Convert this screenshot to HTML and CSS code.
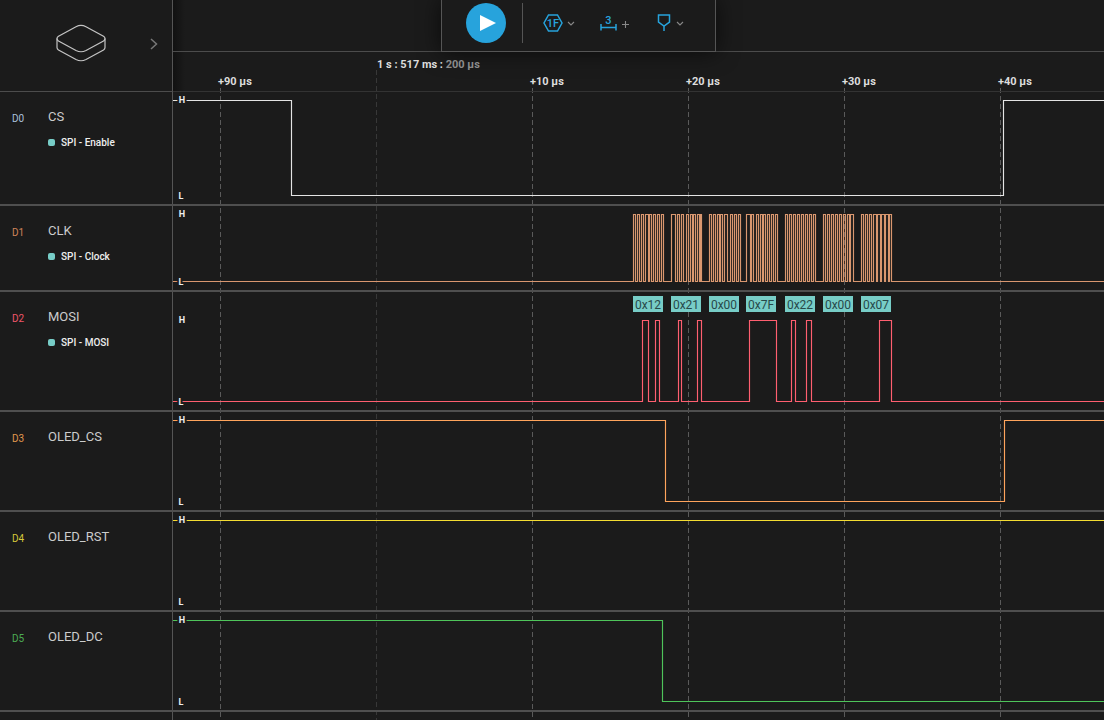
FILE: index.html
```html
<!DOCTYPE html>
<html lang="en">
<head>
    <meta charset="UTF-8">
    <title>Logic analyzer capture</title>
    <link rel="stylesheet" href="styles.css">
</head>
<body>
<div id="app">
    <!-- dashed time grid, sits under the rows -->
    <svg class="grid" width="1104" height="720" viewBox="0 0 1104 720">
        <path class="grid-cursor" d="M376.5 70V720"/>
        <path class="grid-line" d="M220.5 88V720M532.5 88V720M688.5 88V720M844.5 88V720M1000.5 88V720"/>
    </svg>

    <div class="top">
        <div class="brand">
            <svg class="brand-logo" width="52" height="40" viewBox="55 24 52 40">
                <path d="M57 38.5C57 37.5 57.5 37 58.5 36.3L76 26.8C79 25.2 83 25.2 86 26.8L103.500 36.300C104.500 37 105 37.500 105 38.500C105 39.500 104.500 40.300 103.500 41L86 50.500C83 52 79 52 76 50.500L58.500 41C57.500 40.300 57 39.500 57 38.500Z"/>
                <path d="M57 38.500V47.500C57 48.500 57.500 49.300 58.500 50L76 59.500C79 61 83 61 86 59.500L103.500 50C104.500 49.300 105 48.500 105 47.500V38.500"/>
            </svg>
            <svg class="brand-arrow" width="8" height="12" viewBox="0 0 8 12">
                <path d="M1 1L6.500 6L1 11"/>
            </svg>
        </div>
        <div class="top-right">
            <div class="tools">
                <div class="toolbar">
                    <div class="play">
                        <svg width="16" height="16" viewBox="0 0 16 16"><path d="M0 0L16 8L0 16Z"/></svg>
                    </div>
                    <div class="divider"></div>
                    <svg class="tool tool-speed" width="20" height="18" viewBox="0 0 20 18">
                        <path d="M5.500 1H14.500L19 9L14.500 17H5.500L1 9Z"/>
                        <text x="10" y="13">1F</text>
                    </svg>
                    <svg class="chev" width="8" height="5" viewBox="0 0 8 5"><path d="M1 1L4 4L7 1"/></svg>
                    <svg class="tool tool-measure" width="17" height="18" viewBox="0 0 17 18">
                        <text x="8.500" y="9.500">3</text>
                        <path d="M1 10V16.500M16 10V16.500M1 13.500H16"/>
                    </svg>
                    <svg class="plus" width="9" height="9" viewBox="0 0 9 9"><path d="M4.500 1V8M1 4.500H8"/></svg>
                    <svg class="tool tool-trigger" width="14" height="18" viewBox="0 0 14 18">
                        <path d="M1.500 1H12.500V8L7 12L1.500 8ZM7 12V17"/>
                    </svg>
                    <svg class="chev chev-last" width="8" height="5" viewBox="0 0 8 5"><path d="M1 1L4 4L7 1"/></svg>
                </div>
            </div>
            <div class="ruler">
                <span class="cursor-time">1 s : 517 ms : <em>200 µs</em></span>
                <span class="tick t90">+90 µs</span>
                <span class="tick t10">+10 µs</span>
                <span class="tick t20">+20 µs</span>
                <span class="tick t30">+30 µs</span>
                <span class="tick t40">+40 µs</span>
            </div>
        </div>
    </div>

    <div class="row row-cs">
        <div class="label">
            <span class="id id0">D0</span>
            <div>
                <div class="name">CS</div>
                <div class="tag"><i></i>SPI - Enable</div>
            </div>
        </div>
        <svg class="wave" width="931" height="112" viewBox="173 92 931 112">
            <path class="sig sig0" d="M173 100.500H291.500V195.500H1003.500V100.500H1104"/>
            <text class="hl" x="182" y="103">H</text>
            <text class="hl" x="181" y="199">L</text>
        </svg>
    </div>

    <div class="row row-clk">
        <div class="label">
            <span class="id id1">D1</span>
            <div>
                <div class="name">CLK</div>
                <div class="tag"><i></i>SPI - Clock</div>
            </div>
        </div>
        <svg class="wave" width="931" height="84" viewBox="173 206 931 84">
            <path class="sig sig1" d="M173 281.500H633.500
                V214.500H635.500V281.500H637.500V214.500H639.500V281.500H641.500V214.500H643.500V281.500H645.500V214.500H648.500V281.500H649.500V214.500H651.500V281.500H653.500V214.500H655.500V281.500H657.500V214.500H659.500V281.500H661.500V214.500H663.500V281.500
                H671.500V214.500H675.500V281.500H677.500V214.500H679.500V281.500H681.500V214.500H683.500V281.500H686.500V214.500H688.500V281.500H690.500V214.500H692.500V281.500H693.500V214.500H695.500V281.500H697.500V214.500H699.500V281.500H700.500V214.500H701.500V281.500
                H709.500V214.500H711.500V281.500H713.500V214.500H715.500V281.500H717.500V214.500H719.500V281.500H720.500V214.500H722.500V281.500H724.500V214.500H727.500V281.500H730.500V214.500H732.500V281.500H734.500V214.500H736.500V281.500H738.500V214.500H740.500V281.500
                H746.500V214.500H750.500V281.500H751.500V214.500H753.500V281.500H756.500V214.500H758.500V281.500H760.500V214.500H762.500V281.500H763.500V214.500H765.500V281.500H767.500V214.500H769.500V281.500H771.500V214.500H773.500V281.500H775.500V214.500H777.500V281.500
                H785.500V214.500H787.500V281.500H789.500V214.500H791.500V281.500H793.500V214.500H795.500V281.500H797.500V214.500H799.500V281.500H801.500V214.500H803.500V281.500H805.500V214.500H807.500V281.500H809.500V214.500H811.500V281.500H813.500V214.500H815.500V281.500
                H823.500V214.500H825.500V281.500H827.500V214.500H829.500V281.500H831.500V214.500H833.500V281.500H835.500V214.500H837.500V281.500H839.500V214.500H841.500V281.500H843.500V214.500H845.500V281.500H847.500V214.500H849.500V281.500H850.500V214.500H853.500V281.500
                H861.500V214.500H863.500V281.500H865.500V214.500H867.500V281.500H869.500V214.500H871.500V281.500H873.500V214.500H876.500V281.500H877.500V214.500H880.500V281.500H881.500V214.500H884.500V281.500H885.500V214.500H888.500V281.500H889.500V214.500H891.500V281.500
                H1104"/>
            <text class="hl" x="182" y="217">H</text>
            <text class="hl" x="181" y="285">L</text>
        </svg>
    </div>

    <div class="row row-mosi">
        <div class="label">
            <span class="id id2">D2</span>
            <div>
                <div class="name">MOSI</div>
                <div class="tag"><i></i>SPI - MOSI</div>
            </div>
        </div>
        <svg class="wave" width="931" height="118" viewBox="173 292 931 118">
            <g class="bytes">
                <rect x="633" y="296" width="30" height="16"/><text x="648" y="308.500">0x12</text>
                <rect x="671" y="296" width="30" height="16"/><text x="686" y="308.500">0x21</text>
                <rect x="709" y="296" width="30" height="16"/><text x="724" y="308.500">0x00</text>
                <rect x="746" y="296" width="30" height="16"/><text x="761" y="308.500">0x7F</text>
                <rect x="785" y="296" width="30" height="16"/><text x="800" y="308.500">0x22</text>
                <rect x="823" y="296" width="30" height="16"/><text x="838" y="308.500">0x00</text>
                <rect x="861" y="296" width="30" height="16"/><text x="876" y="308.500">0x07</text>
            </g>
            <path class="sig sig2" d="M173 401.500H642.500V320.500H648.500V401.500H655.500V320.500H659.500V401.500H678.500V320.500H681.500V401.500H697.500V320.500H701.500V401.500H749.500V320.500H776.500V401.500H791.500V320.500H795.500V401.500H806.500V320.500H811.500V401.500H879.500V320.500H891.500V401.500H1104"/>
            <text class="hl" x="182" y="323">H</text>
            <text class="hl" x="181" y="405">L</text>
        </svg>
    </div>

    <div class="row row-std">
        <div class="label">
            <span class="id id3">D3</span>
            <div class="name">OLED_CS</div>
        </div>
        <svg class="wave" width="931" height="98" viewBox="173 412 931 98">
            <path class="sig sig3" d="M173 420.500H665.500V501.500H1004.500V420.500H1104"/>
            <text class="hl" x="182" y="423">H</text>
            <text class="hl" x="181" y="505">L</text>
        </svg>
    </div>

    <div class="row row-std">
        <div class="label">
            <span class="id id4">D4</span>
            <div class="name">OLED_RST</div>
        </div>
        <svg class="wave" width="931" height="98" viewBox="173 512 931 98">
            <path class="sig sig4" d="M173 520.500H1104"/>
            <text class="hl" x="182" y="523">H</text>
            <text class="hl" x="181" y="605">L</text>
        </svg>
    </div>

    <div class="row row-std">
        <div class="label">
            <span class="id id5">D5</span>
            <div class="name">OLED_DC</div>
        </div>
        <svg class="wave" width="931" height="98" viewBox="173 612 931 98">
            <path class="sig sig5" d="M173 620.500H662.500V701.500H1104"/>
            <text class="hl" x="182" y="623">H</text>
            <text class="hl" x="181" y="705">L</text>
        </svg>
    </div>

    <div class="rest"></div>
</div>
</body>
</html>
```

FILE: styles.css
```css
* {
    margin: 0;
    padding: 0;
    box-sizing: border-box;
}

html, body {
    height: 720px;
    overflow: hidden;
    background-color: #1b1b1b;
}

#app {
    width: 1104px;
    height: 720px;
    position: relative;
    overflow: hidden;
    font-family: Roboto, "Liberation Sans", sans-serif;
    color: #ccc;
}

.grid {
    position: absolute;
    left: 0;
    top: 0;
}

.grid path {
    fill: none;
    stroke-dasharray: 5 3;
}

.grid-line {
    stroke: #5a5a5a;
}

.grid-cursor {
    stroke: #383838;
}

/* top bar */
.top {
    height: 92px;
    display: flex;
    position: relative;
}

.brand {
    width: 173px;
    height: 92px;
    flex-shrink: 0;
    padding: 24px 14px 0 55px;
    display: flex;
    justify-content: space-between;
    align-items: flex-start;
    border-right: 1px solid #555;
    border-bottom: 1px solid #4c4c4c;
}

.brand-logo path {
    fill: none;
    stroke: #c4c4c4;
    stroke-width: 1.2;
}

.brand-arrow {
    margin-top: 14px;
}

.brand-arrow path {
    fill: none;
    stroke: #777;
    stroke-width: 1.5;
}

.top-right {
    flex: 1;
    background-image: linear-gradient(to right, #111, rgba(27, 27, 27, 0) 12px);
}

.tools {
    height: 52px;
    padding-left: 268px;
    border-bottom: 1px solid #4c4c4c;
}

.toolbar {
    width: 275px;
    height: 52px;
    padding: 3px 0 0 24px;
    display: flex;
    align-items: flex-start;
    background-color: #1b1b1b;
    border: 1px solid #555;
    border-top: 0;
    box-shadow: 0 0 22px rgba(0, 0, 0, 0.65);
    position: relative;
}

.play {
    width: 40px;
    height: 40px;
    padding: 12px 0 0 14px;
    border-radius: 50%;
    background-color: #27a3dc;
}

.play path {
    fill: #fff;
}

.divider {
    width: 1px;
    height: 40px;
    margin-left: 16px;
    background-color: #555;
}

.tool {
    margin-top: 11px;
}

.tool path {
    fill: none;
    stroke: #27a3dc;
    stroke-width: 1.5;
}

.tool text {
    fill: #27a3dc;
    font-size: 11px;
    font-weight: 500;
    text-anchor: middle;
}

.tool-speed {
    margin-left: 20px;
}

.tool-measure {
    margin-left: 25px;
}

.tool-trigger {
    margin-left: 27px;
}

.chev {
    margin: 18px 0 0 4px;
}

.chev-last {
    margin-left: 5px;
}

.chev path, .plus path {
    fill: none;
    stroke: #888;
    stroke-width: 1.1;
}

.plus {
    margin: 17px 0 0 4px;
}

.ruler {
    height: 40px;
    position: relative;
    border-bottom: 1px solid #333;
    font-size: 11px;
    font-weight: 700;
    color: #ddd;
}

.cursor-time, .tick {
    position: absolute;
    white-space: nowrap;
    line-height: 13px;
}

.cursor-time {
    left: 204px;
    top: 6px;
}

.cursor-time em {
    font-style: normal;
    color: #8c8c8c;
}

.tick {
    top: 23px;
}

.t90 { left: 45px; }
.t10 { left: 357px; }
.t20 { left: 513px; }
.t30 { left: 669px; }
.t40 { left: 825px; }

/* channel rows */
.row {
    display: flex;
    position: relative;
    border-bottom: 2px solid #4f4f4f;
}

.row-cs { height: 114px; }
.row-clk { height: 86px; }
.row-mosi { height: 120px; }
.row-std { height: 100px; }

.label {
    width: 173px;
    flex-shrink: 0;
    padding: 17px 0 0 12px;
    display: flex;
    border-right: 1px solid #555;
    background-color: #1b1b1b;
}

.id {
    width: 36px;
    margin-top: 3px;
    font-size: 10px;
    line-height: 13px;
}

.id0 { color: #a9c1dc; }
.id1 { color: #d1845a; }
.id2 { color: #f0566a; }
.id3 { color: #e0984e; }
.id4 { color: #d6c93a; }
.id5 { color: #4cad55; }

.name {
    font-size: 13px;
    line-height: 16px;
    color: #ccc;
}

.tag {
    margin-top: 11px;
    display: flex;
    align-items: center;
    font-size: 10px;
    font-weight: 500;
    line-height: 13px;
    color: #eee;
}

.tag i {
    width: 7px;
    height: 7px;
    margin-right: 6px;
    border-radius: 2px;
    background-color: #77cdc7;
}

.wave {
    display: block;
    flex-shrink: 0;
}

.sig {
    fill: none;
    stroke-width: 1.15;
}

.sig0 { stroke: #e4e4e4; }
.sig1 { stroke: #d9976f; }
.sig2 { stroke: #ff5f70; }
.sig3 { stroke: #ffa45c; }
.sig4 { stroke: #f4dc32; }
.sig5 { stroke: #4ec45a; }

.hl {
    fill: #eee;
    font-size: 9px;
    font-weight: 700;
    text-anchor: middle;
    paint-order: stroke;
    stroke: #1b1b1b;
    stroke-width: 4px;
}

.bytes rect {
    fill: #77cdc7;
}

.bytes text {
    fill: #28494a;
    font-size: 12px;
    text-anchor: middle;
}

.rest {
    height: 8px;
    width: 173px;
    border-right: 1px solid #555;
}
```
